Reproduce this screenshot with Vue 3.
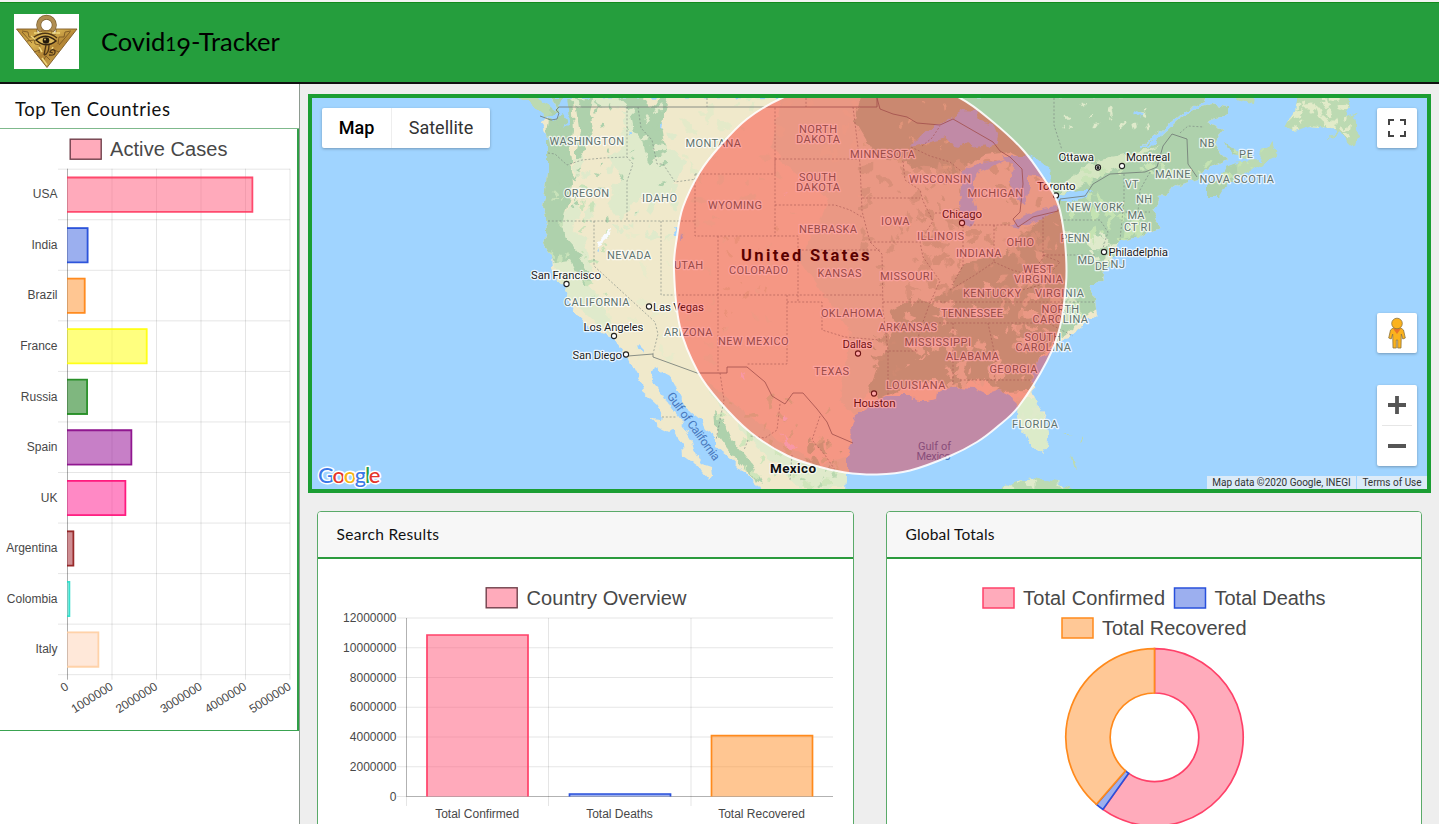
<script setup>
const countries = [
  { name: 'USA', end: 253, color: '255, 51, 91', fill: 'rgba(255, 86, 120, .5)' },
  { name: 'India', end: 88.2, color: '18, 62, 214', fill: 'rgba(56, 96, 224, .5)' },
  { name: 'Brazil', end: 85.3, color: '255, 126, 6', fill: 'rgba(255, 145, 46, .52)' },
  { name: 'France', end: 147.3, color: '255, 255, 0', fill: 'rgba(255, 255, 0, .5)' },
  { name: 'Russia', end: 87.7, color: '22, 135, 22', fill: 'rgba(0, 112, 0, .5)' },
  { name: 'Spain', end: 132, color: '132, 0, 132', fill: 'rgba(144, 0, 144, .5)' },
  { name: 'UK', end: 126, color: '255, 0, 110', fill: 'rgba(255, 20, 140, .5)' },
  { name: 'Argentina', end: 74, color: '139, 20, 20', fill: 'rgba(160, 30, 40, .5)' },
  { name: 'Colombia', end: 70, color: '26, 218, 196', fill: 'rgba(64, 224, 208, .4)' },
  { name: 'Italy', end: 99, color: '255, 205, 158', fill: 'rgba(255, 205, 170, .45)' },
].map((c, i) => ({ ...c, y: 169.5 + i * 50.55 }))

const sideTicks = [0, 1, 2, 3, 4, 5].map((n) => ({ x: 67.5 + n * 44.5, label: n ? n + '000000' : '0' }))
const yTicks = [12, 10, 8, 6, 4, 2, 0].map((n, i) => ({ y: 618 + i * 29.75, label: n ? n + '000000' : '0' }))
const overview = [
  { label: 'Total Confirmed', x: 427, top: 635, line: '#ff4169', fill: 'rgba(255, 86, 120, .5)', mid: 477.2 },
  { label: 'Total Deaths', x: 569.5, top: 794, line: '#2850dc', fill: 'rgba(56, 96, 224, .5)', mid: 619.5 },
  { label: 'Total Recovered', x: 711.5, top: 735.7, line: '#ff8a1c', fill: 'rgba(255, 145, 46, .52)', mid: 761.5 },
]

function slice(a, b) {
  const cx = 1154.5, cy = 737.3, R = 88.7, r = 44.3
  const p = (rad, deg) => {
    const t = (deg * Math.PI) / 180
    return (cx + rad * Math.sin(t)).toFixed(2) + ' ' + (cy - rad * Math.cos(t)).toFixed(2)
  }
  const big = b - a > 180 ? 1 : 0
  return `M${p(R, a)}A${R} ${R} 0 ${big} 1 ${p(R, b)}L${p(r, b)}A${r} ${r} 0 ${big} 0 ${p(r, a)}Z`
}
const slices = [
  { d: slice(0, 215.6), line: '#ff4169', fill: '#ffabbb' },
  { d: slice(215.6, 220.9), line: '#2850dc', fill: '#9cafef' },
  { d: slice(220.9, 360), line: '#ff8a1c', fill: '#ffc896' },
]

const land =
  'M552 98L557 108 551 118 541 119 545 129 548 137 548 171 546 191 543 207 546 217 547 231 544 244 551 254 552 267 557 281 567 287 565 296 575 311 583 321 592 329 612 337 620 347 628 357 635 372 642 384 643 392 657 404 663 414 662 420 650 419 660 427 668 431 673 429 682 444 683 456 697 466 703 474 709 481 713 476 712 467 703 464 695 451 692 441 683 426 678 417 668 404 663 394 653 382 652 374 655 367 663 372 672 377 675 387 680 397 685 407 700 419 705 429 715 436 715 446 730 457 738 466 748 476 757 484 762 492 846 492 847 471 847 454 852 444 851 427 855 416 867 409 875 401 887 396 910 396 918 401 927 401 937 399 938 392 947 389 960 386 973 387 987 394 1000 390 1013 397 1018 406 1017 417 1022 429 1027 439 1035 447 1042 453 1047 447 1048 434 1045 417 1035 399 1032 391 1033 374 1040 357 1053 347 1062 339 1073 336 1078 329 1097 314 1095 301 1090 296 1092 284 1097 284 1103 277 1105 271 1115 257 1117 247 1120 241 1140 237 1160 227 1157 221 1153 211 1160 197 1177 186 1197 179 1200 174 1207 169 1227 159 1220 152 1215 144 1222 129 1207 122 1227 114 1227 107 1213 104 1193 109 1177 121 1160 137 1140 147 1163 129 1183 112 1198 104 1210 96Z'
const islands = [
  'M519 96L533 106 547 117 555 114 553 107 540 100 533 96Z',
  'M1207 186L1207 196 1220 196 1227 184 1247 172 1260 166 1277 156 1272 141 1262 151 1260 161 1240 162 1227 167 1222 176Z',
  'M1225 142L1237 151 1253 154 1250 159 1233 156Z',
  'M1284 127L1293 114 1297 96 1348 96 1350 107 1345 117 1355 114 1358 134 1355 146 1347 142 1340 131 1327 142 1336 131 1320 127 1307 126 1293 131Z',
  'M1234 96L1256 96 1255 105 1244 103Z',
  'M999 492L1013 482 1033 478 1057 482 1079 492Z',
  'M1069 454L1074 460 1077 469 1073 466Z',
  'M1079 442L1082 436 1082 441Z', 'M1063 434L1072 434 1066 435Z',
]

const greens = [
  'M552 96L572 96 574 130 570 150 573 185 566 210 562 225 567 240 580 255 590 280 584 285 570 260 556 262 544 250 540 190Z',
  'M574 96L594 96 590 112 593 130 586 145 581 160 576 180 576 150 579 130Z',
  'M615 96L642 96 650 108 664 96 669 105 660 122 663 140 668 152 655 158 650 166 645 152 642 140 634 130 630 110Z',
  'M861 96L1230 96 1240 200 1165 240 1120 262 1095 310 1040 355 1030 391 1000 392 980 378 950 389 935 380 910 387 880 398 868 392 880 360 895 325 890 310 912 298 930 303 950 288 965 262 1000 255 1030 228 1056 205 1048 170 1010 152 985 155 960 170 950 178 935 168 918 170 900 160 878 158 866 140 854 120Z',
  'M713 410L722 418 732 440 745 456 755 470 762 484 752 478 737 460 722 440 714 425Z',
]
const limes = [
  'M594 96L625 96 640 135 660 150 690 148 680 175 660 200 640 195 620 220 605 200 585 208 570 230 600 245 590 285 620 320 610 335 560 290 548 240 580 190Z',
  'M745 96L862 96 1010 100 1060 180 1060 300 960 360 868 390 858 420 840 400 850 330 800 260 830 200 780 160Z',
  'M846 488L800 488 760 450 720 405 700 375 730 400 780 440 820 465 852 455Z',
]
const tans = [
  'M590 106L626 108 622 150 606 154 620 175 613 200 580 215 573 180Z',
  'M664 122L670 106 780 98 770 160 720 175 690 165 672 150Z',
  'M648 214L700 225 715 245 790 275 815 300 810 345 780 420 700 372 650 346 615 332 600 300 585 240Z',
]

// Seeded scatter of small ground patches over a region
let seed = 11
const rnd = () => (seed = (seed * 16807) % 2147483647) / 2147483647
function scatter(x, y, w, h, n, size, color) {
  let d = ''
  for (let i = 0; i < n; i++) {
    const cx = x + rnd() * w, cy = y + rnd() * h
    const s = size * (0.4 + rnd()), tilt = rnd() * 3
    const pts = []
    for (let k = 0; k < 7; k++) {
      const a = (k / 7) * Math.PI * 2
      const r = s * (0.4 + rnd() * 0.8)
      const px = r * Math.cos(a), py = r * 0.5 * Math.sin(a)
      pts.push((cx + px * Math.cos(tilt) - py * Math.sin(tilt)).toFixed(1) + ' ' + (cy + px * Math.sin(tilt) + py * Math.cos(tilt)).toFixed(1))
    }
    d += 'M' + pts.join('L') + 'Z'
  }
  return { d, color }
}
const patches = [
  scatter(575, 98, 100, 140, 40, 7, '#dfeacb'),
  scatter(550, 100, 120, 140, 30, 4, '#aed1ac'),
  scatter(548, 180, 60, 130, 30, 5, '#c8e2b9'),
  scatter(600, 220, 190, 140, 45, 6, '#e8ebcb'),
  scatter(680, 100, 180, 120, 40, 7, '#e4eac9'),
  scatter(720, 225, 60, 110, 14, 4, '#e0dfba'),
  scatter(862, 165, 100, 130, 55, 7, '#c7dcba'),
  scatter(920, 160, 125, 130, 55, 7, '#c2d9b5'),
  scatter(905, 270, 150, 110, 55, 7, '#dfeacb'),
  scatter(1000, 225, 70, 130, 36, 6, '#d3e2c0'),
  scatter(920, 340, 110, 45, 20, 5, '#dfeacb'),
  scatter(930, 385, 95, 14, 14, 4, '#e6ebcb'),
  scatter(855, 100, 100, 70, 18, 4, '#cfe2ba'),
  scatter(872, 335, 25, 60, 14, 5, '#b4d3ae'),
  scatter(1060, 195, 80, 60, 24, 8, '#c4e3b2'),
  scatter(1090, 235, 28, 45, 18, 6, '#dfeacb'),
  scatter(1080, 160, 90, 20, 16, 6, '#c9e4b7'),
  scatter(1060, 98, 90, 30, 15, 4, '#dfeacb'),
  scatter(1200, 150, 75, 40, 15, 5, '#c4e3b2'),
  scatter(1290, 98, 60, 45, 34, 6, '#e2ebc9'),
  scatter(720, 400, 120, 88, 35, 6, '#cfe5bb'),
  scatter(790, 440, 55, 48, 15, 5, '#b9d8b0'),
  scatter(1020, 410, 26, 40, 8, 6, '#dfeacb'),
  scatter(1000, 478, 75, 14, 10, 6, '#dfeacb'),
  scatter(1065, 300, 30, 30, 10, 5, '#c9e4b7'),
]

const lakes = [
  'M912 146L923 133 953 117 963 110 977 111 981 121 993 124 998 137 996 145 977 148 967 142 960 147 950 145 947 138 930 142Z',
  'M967 167L987 162 1007 159 993 166 980 171 973 181 973 197 977 211 972 224 962 226 959 204 961 184 963 172Z',
  'M1003 156L1027 156 1037 159 1047 174 1050 184 1040 177 1030 174 1030 186 1028 194 1025 204 1018 201 1010 181 1013 167Z',
  'M1010 226L1020 217 1037 211 1057 206 1058 209 1047 216 1020 228Z',
  'M1053 198L1060 195 1080 190 1092 190 1087 197 1070 202 1056 202Z',
  'M1024 158L1037 158 1050 168 1052 182 1042 178Z',
  'M563 98L567 98 569 110 570 124 564 130 567 120 562 114 553 121 548 118 557 112Z',
  'M673 227L677 229 678 236 675 236Z', 'M681 232L683 238 680 240Z', 'M639 344L644 349 642 353Z',
  'M660 123L662 126 660 130Z', 'M628 129L632 134 629 135Z', 'M597 248L600 252 598 253Z', 'M1132 110L1143 113 1140 117 1134 115Z',
]

const stateLines = [
  'M548 153L555 154 567 165 582 160 603 158 627 157', 'M627 107V157L633 164 627 181V221', 'M548 221H695',
  'M638 107L641 128 652 140 657 164 663 164 675 182 697 179', 'M695 174H775V107M695 174V236H798V302M775 159V236',
  'M661 221V295H883', 'M594 221V266L655 322 658 334 653 354', 'M718 236V373', 'M787 295V364H747', 'M787 302H822V330L845 337 880 340',
  'M775 159H861', 'M775 205H835L850 210 862 217', 'M853 107L860 164 862 211 870 242 882 254 883 310 888 350 888 395',
  'M862 198H920', 'M870 242H918', 'M798 250H880', 'M903 161L905 180 920 190 923 201 933 221 920 242 923 257 940 281 930 303 920 330 915 352',
  'M911 147L930 156 950 162 962 172', 'M935 213H960', 'M963 226V266L952 285', 'M970 225H1010', 'M994 225V262L975 275 950 290',
  'M1043 217V258L1030 275 1012 270 994 262', 'M1060 220H1100L1108 232 1103 248', 'M1043 255H1095', 'M1043 255L1060 262 1040 285 1015 292',
  'M883 302H1095', 'M920 323H1048L1073 336', 'M953 323V385', 'M988 323L996 360 994 380', 'M885 351H918', 'M960 380H1030',
  'M662 417H676', 'M720 373L724 400 716 440', 'M780 404L777 430 765 438 750 436', 'M820 416L812 440 825 455 835 470',
  'M748 440L744 450', 'M792 455L790 480', 'M1124 174V200L1120 240', 'M1150 172L1140 190 1138 212', 'M1122 212H1150', 'M1180 133L1188 126 1204 127',
  'M1054 98V125L1062 150', 'M707 98V107', 'M806 98V107', 'M922 146L932 138 940 126',
]

// Overlay outline, smoothed through its vertices
const ring = [
  [782, 98], [747, 119], [720, 146], [700, 172], [683, 207], [677, 237], [674, 270], [680, 327], [698, 372], [720, 402], [750, 432], [787, 455.5],
  [820, 467], [845, 472.5], [877, 474.5], [910, 470.5], [950, 456], [977, 442], [997, 427], [1019, 406], [1047, 361], [1060, 327], [1066, 284], [1066, 255],
  [1063, 226], [1057, 201], [1043, 177], [1023, 150], [993, 122], [960, 98], [915, 82], [830, 82],
]
const ringPath = (() => {
  const n = ring.length
  let d = `M${ring[0]}`
  for (let i = 0; i < n; i++) {
    const a = ring[(i + n - 1) % n], b = ring[i], c = ring[(i + 1) % n], e = ring[(i + 2) % n]
    d += `C${b[0] + (c[0] - a[0]) / 6} ${b[1] + (c[1] - a[1]) / 6} ${c[0] - (e[0] - b[0]) / 6} ${c[1] - (e[1] - b[1]) / 6} ${c[0]} ${c[1]}`
  }
  return d + 'Z'
})()

// text, left, right, baseline
const states = [
  ['WASHINGTON', 549.5, 624, 145.5], ['OREGON', 564, 609, 197], ['IDAHO', 642, 677, 202], ['MONTANA', 685.5, 741, 147], ['NEVADA', 607, 651, 259],
  ['UTAH', 674, 703, 269], ['WYOMING', 708, 762, 209.5], ['COLORADO', 729, 788, 274.5], ['NORTH', 799, 837, 133.3], ['DAKOTA', 796, 840, 143.3],
  ['SOUTH', 799, 836, 181], ['DAKOTA', 796, 840, 191], ['MINNESOTA', 850, 915, 158.5], ['WISCONSIN', 909, 971, 183], ['MICHIGAN', 967.5, 1023, 197],
  ['IOWA', 881, 909.5, 225], ['NEBRASKA', 799, 857, 233], ['ILLINOIS', 917, 964, 240.5], ['INDIANA', 956, 1001.5, 257.5], ['OHIO', 1006.5, 1034, 246.5],
  ['KANSAS', 817.5, 861.5, 277.5], ['MISSOURI', 880, 933, 280], ['WEST', 1023, 1053, 273], ['VIRGINIA', 1014, 1063, 283], ['KENTUCKY', 963, 1021, 297],
  ['VIRGINIA', 1035, 1084, 297], ['CALIFORNIA', 564, 629.5, 306], ['ARIZONA', 664, 712.5, 336.5], ['NEW MEXICO', 718, 788.5, 345], ['OKLAHOMA', 821, 883, 317.5],
  ['TENNESSEE', 941, 1003, 317.5], ['ARKANSAS', 878.5, 937, 331.5], ['MISSISSIPPI', 904.5, 971, 346], ['ALABAMA', 946, 999, 360.5], ['GEORGIA', 989.5, 1037.5, 373.5],
  ['NORTH', 1041.5, 1079, 313.5], ['CAROLINA', 1032.5, 1088, 323.5], ['SOUTH', 1024.5, 1061, 341.5], ['CAROLINA', 1015.5, 1071, 351.5], ['TEXAS', 814, 849, 375],
  ['LOUISIANA', 886, 945.5, 389.5], ['FLORIDA', 1012, 1058, 428.5], ['PENN', 1060.5, 1089.5, 242.5], ['NEW YORK', 1066.5, 1123, 211.5], ['MD', 1077.5, 1094.5, 264],
  ['DE', 1095, 1108, 270], ['NJ', 1110.5, 1125, 268.5], ['CT', 1124, 1137.5, 231.5], ['RI', 1140.5, 1151, 231.5], ['MA', 1127.5, 1144.5, 219.5],
  ['NH', 1136, 1152, 203.5], ['VT', 1125, 1138.5, 188], ['MAINE', 1155, 1190.5, 178], ['NB', 1199.5, 1214.5, 147], ['PE', 1239, 1253, 158], ['NOVA SCOTIA', 1199.5, 1274, 183],
]
const cities = [
  ['San Francisco', 531, 601, 279, 566.5, 284], ['Los Angeles', 583.5, 643.5, 331, 614, 336], ['San Diego', 572.5, 622, 359, 626, 354.5],
  ['Las Vegas', 653, 704, 311, 649, 306.5], ['Dallas', 842.5, 872.5, 348.5, 858, 353.5], ['Houston', 853.5, 895.5, 407.5, 874, 393.5],
  ['Chicago', 942, 982, 218, 962, 223], ['Toronto', 1037, 1075.5, 190, 1056, 195.5], ['Ottawa', 1058.5, 1094, 161.5, 1098, 167.5],
  ['Montreal', 1126, 1170, 161, 1122, 166], ['Philadelphia', 1108.5, 1168, 256.5, 1104, 252],
]
</script>

<template>
  <div class="page">
    <header class="topbar">
      <svg class="logo" width="65" height="55" viewBox="0 0 65 55">
        <defs>
          <linearGradient id="gold" x1="0" y1="0" x2="1" y2="1">
            <stop offset="0" stop-color="#b98a35" /><stop offset=".35" stop-color="#d9b352" />
            <stop offset=".55" stop-color="#b28433" /><stop offset="1" stop-color="#e0bf62" />
          </linearGradient>
        </defs>
        <rect width="65" height="55" fill="#fff" />
        <circle cx="32.500" cy="11" r="7.800" fill="none" stroke="#7b6030" stroke-width="5" />
        <circle cx="32.500" cy="11" r="7.800" fill="none" stroke="#b08d51" stroke-width="3.600" />
        <path d="M2.500 15H23v5h4l0-3h11v3h4v-5h21L33 53.500Z" fill="url(#gold)" stroke="#7d5a24" stroke-width=".9" />
        <path d="M8 17l6 1 1 5 5 0 1 7 5 1-1 8M57 17l-6 1-1 5-5 0-1 7M13 27l7-1M20 38l6-2M45 38l-5-2M8 18l10 11M56 18L45 31M29 47l3-5 4 4" fill="none" stroke="#7d5a24" stroke-width=".9" />
        <path d="M20 19h8M38 19h8M17 22l5 4M28 44l5 7M25 33l3 5M39 33l-2 4" stroke="#f0d77c" stroke-width="1.500" />
        <path d="M22 26q10-8 20 1-10 8-20-1Z" fill="#dcb95e" stroke="#352410" stroke-width="1.500" />
        <path d="M20 23q12-8 23 1M32 31l-2 10M35 31q0 9-5 10M35 41q7 1 6-4-3-3-5 1l3 1" fill="none" stroke="#4d3515" stroke-width="1.300" />
        <circle cx="32" cy="26.500" r="3.300" fill="#22180c" /><circle cx="31" cy="25.500" r=".9" fill="#e7c96d" />
      </svg>
      <h1>Covid<span class="low-one">1</span><span class="low-nine">9</span>-Tracker</h1>
    </header>

    <div class="body">
      <aside class="side">
        <h2>Top Ten Countries</h2>
        <div class="side-chart">
          <svg width="298" height="601" viewBox="0 129.300 298 601" class="chart">
            <g stroke="#000" stroke-opacity=".1">
              <path v-for="n in 11" :key="'h' + n" :d="`M58 ${169.5 + (n - 1) * 50.55}H290`" />
              <path v-for="t in sideTicks.slice(1)" :key="'v' + t.x" :d="`M${t.x} 169V680`" />
            </g>
            <path d="M67.500 169V680" stroke="#000" stroke-opacity=".32" />
            <g v-for="c in countries" :key="c.name">
              <rect x="67" :y="c.y + 7.6" :width="c.end - 67" height="35.5" :fill="c.fill" />
              <path :d="`M67 ${c.y + 8.3}H${c.end - 0.6}V${c.y + 42.6}H67`" fill="none" :stroke="`rgb(${c.color})`" stroke-opacity=".82" stroke-width="1.800" />
              <text x="57.500" :y="c.y + 29.2" text-anchor="end" font-size="12">{{ c.name }}</text>
            </g>
            <text v-for="t in sideTicks" :key="t.label" text-anchor="end" font-size="12" :transform="`translate(${t.x + 2} 689) rotate(-32)`">{{ t.label }}</text>
            <rect x="70.200" y="139.500" width="31" height="20" fill="#ffabbb" stroke="#70404b" stroke-width="1.400" />
            <text x="110" y="156.300" font-size="20" textLength="117.500">Active Cases</text>
          </svg>
        </div>
      </aside>

      <main class="main">
        <section class="map">
          <svg class="canvas" viewBox="312 98 1115 391">
            <defs>
              <filter id="rough" x="312" y="90" width="1115" height="405" filterUnits="userSpaceOnUse" color-interpolation-filters="sRGB">
                <feTurbulence type="fractalNoise" baseFrequency=".12" numOctaves="2" seed="4" />
                <feDisplacementMap in="SourceGraphic" scale="8" xChannelSelector="R" yChannelSelector="G" />
              </filter>
              <clipPath id="ground"><path :d="land + islands.join('')" /></clipPath>
            </defs>
            <rect x="312" y="98" width="1115" height="391" fill="#a0d4ff" />
            <g filter="url(#rough)">
              <path :d="land" fill="#f0e9cb" />
              <path v-for="d in islands" :key="d" :d="d" fill="#bcdab2" />
              <g clip-path="url(#ground)">
                <path v-for="d in limes" :key="d" :d="d" fill="#dfeacb" />
                <path v-for="d in tans" :key="d" :d="d" fill="#f0e9cb" />
                <path v-for="d in greens" :key="d" :d="d" fill="#aed1ac" />
                <path d="M1017 398L1035 398 1050 430 1046 455 1030 445 1017 425Z" fill="#dcebc9" />
                <path d="M1060 196L1090 180 1125 165 1160 145 1135 152 1095 160 1060 185Z" fill="#d5e6c2" />
                <path v-for="(p, i) in patches" :key="i" :d="p.d" :fill="p.color" />
                <path d="M597 246L603 235 611 229 610 236 603 242Z" fill="#f8fbff" />
              </g>
              <path v-for="d in lakes" :key="d" :d="d" fill="#a0d4ff" />
              <path d="M1140 147L1150 145 1162 134" fill="none" stroke="#a0d4ff" stroke-width="2.500" />
              <path d="M741 370l4 10-4-2zM784 413l4 7-4 2zM780 432l8 10 10 3-8 6zM789 192l-7 6 4-5z" fill="#f5e9ff" />
            </g>
            <path v-for="d in stateLines" :key="d" :d="d" fill="none" stroke="#76827c" stroke-opacity=".75" stroke-width=".8" stroke-dasharray="2 1.800" />
            <path d="M540 116L551 120 557 119 559 113 556 110 559 107H877V98L880 109 893 114 907 117 917 123 940 125 953 119 993 142 1000 151 1010 157 1022 169 1023 184 1020 212 1013 219 1018 227 1033 217 1058 211 1060 199 1085 196 1093 184 1110 174 1145 172 1157 167 1163 146 1172 134 1187 139 1188 164 1197 177M628 356L653 354V357L697 373H727V367H747L765 382 772 396 785 404 793 393 803 393 817 409 827 422 832 434 853 443" fill="none" stroke="#6e7774" stroke-width=".8" />
            <g class="state">
              <text v-for="(s, i) in states" :key="i" :x="s[1]" :y="s[3] - 0.4" :textLength="s[2] - s[1]">{{ s[0] }}</text>
            </g>
            <g class="city">
              <template v-for="c in cities" :key="c[0]">
                <text :x="c[1]" :y="c[3] - 0.5" :textLength="c[2] - c[1]">{{ c[0] }}</text>
                <circle :cx="c[4]" :cy="c[5]" r="2.600" />
              </template>
              <circle class="dot" cx="1098" cy="167.500" r="1" />
            </g>
            <text class="country usa" x="741" y="260.500" textLength="128.500">United States</text>
            <text class="country" x="770" y="473" font-size="13.500" textLength="46">Mexico</text>
            <g class="sea">
              <text x="918" y="450" textLength="33">Gulf of</text>
              <text x="916.500" y="460" textLength="34">Mexico</text>
              <text transform="translate(666.500 396) rotate(54)" x="0" y="0" font-size="12" textLength="81">Gulf of California</text>
            </g>
            <path :d="ringPath" fill="#f00" fill-opacity=".35" stroke="#fff" stroke-opacity=".9" stroke-width="2" />
            <text class="brand" x="318" y="482.500" textLength="62.500"><tspan fill="#3b78e7">G</tspan><tspan fill="#e5352b">o</tspan><tspan fill="#f6b514">o</tspan><tspan fill="#3b78e7">g</tspan><tspan fill="#2a9d48">l</tspan><tspan fill="#e5352b">e</tspan></text>
          </svg>
          <div class="types"><b>Map</b><span>Satellite</span></div>
          <div class="control full">
            <svg width="18" height="18" viewBox="0 0 18 18"><path d="M1 6V1h5M12 1h5v5M17 12v5h-5M6 17H1v-5" fill="none" stroke="#444" stroke-width="2" /></svg>
          </div>
          <div class="control peg">
            <svg width="18" height="32" viewBox="0 0 18 32" stroke="#8a7440" stroke-width=".8">
              <path d="M5 11h8l2.500 2 1.800 8-2.500 1-1.500-5-.3 14H9.700V23H8.300v8H5L4.700 17l-1.500 5-2.500-1 1.800-8Z" fill="#fbb21d" />
              <path d="M5 11.500h8L9 17Z" fill="#e8742a" stroke="none" />
              <circle cx="9" cy="6.500" r="5.300" fill="#fbb21d" />
            </svg>
          </div>
          <div class="control zoom">
            <svg width="40" height="81" viewBox="0 0 40 81">
              <path d="M11 20h18M20 11v18M11 61h18" stroke="#555" stroke-width="3.800" /><path d="M5 40.500h30" stroke="#e6e6e6" />
            </svg>
          </div>
          <div class="credits"><span>Map data ©2020 Google, INEGI</span><span>Terms of Use</span></div>
        </section>

        <div class="cards">
          <section class="card">
            <h3>Search Results</h3>
            <svg width="535" height="266" viewBox="318 559 535 266" class="chart">
              <g stroke="#000" stroke-opacity=".1">
                <path v-for="t in yTicks" :key="t.y" :d="`M397 ${t.y}H833`" />
                <path d="M406.500 618V806M548.500 618V806M691 618V806" />
              </g>
              <path d="M406.500 618V796M406 796.500H833" stroke="#000" stroke-opacity=".22" fill="none" />
              <text v-for="t in yTicks" :key="'t' + t.y" x="396.500" :y="t.y + 4.2" font-size="12" text-anchor="end">{{ t.label }}</text>
              <g v-for="b in overview" :key="b.label">
                <rect :x="b.x" :y="b.top" width="101" :height="796.500 - b.top" :fill="b.fill" />
                <path :d="`M${b.x} 796.5V${b.top}H${b.x + 101}V796.5`" fill="none" :stroke="b.line" stroke-width="1.700" />
                <text :x="b.mid" y="817.500" text-anchor="middle" font-size="12">{{ b.label }}</text>
              </g>
              <rect x="486.200" y="587.800" width="31" height="20" fill="#ffabbb" stroke="#70404b" stroke-width="1.400" />
              <text x="526.500" y="604.500" font-size="20" textLength="160">Country Overview</text>
            </svg>
          </section>
          <section class="card">
            <h3 class="totals">Global Totals</h3>
            <svg width="534" height="266" viewBox="887 559 534 266" class="chart">
              <g stroke-width="1.500">
                <rect x="983" y="588" width="31" height="20" fill="#ffabbb" stroke="#ff4169" />
                <rect x="1174.500" y="588" width="31" height="20" fill="#9cafef" stroke="#2850dc" />
                <rect x="1062" y="618" width="31" height="20" fill="#ffc896" stroke="#ff8a1c" />
              </g>
              <g font-size="20">
                <text x="1023" y="604.500" textLength="142">Total Confirmed</text>
                <text x="1214.500" y="604.500" textLength="111">Total Deaths</text>
                <text x="1102" y="634.500" textLength="144.500">Total Recovered</text>
              </g>
              <path v-for="s in slices" :key="s.line" :d="s.d" :fill="s.fill" :stroke="s.line" stroke-width="1.700" />
            </svg>
          </section>
        </div>
      </main>
    </div>
  </div>
</template>

<style>
body { margin: 0; overflow: hidden; }
</style>

<style scoped>
.page { box-sizing: border-box; height: 824px; padding-top: 2px; display: flex; flex-direction: column; overflow: hidden; background: #f3f3f3; font-family: Lato, "Open Sans", sans-serif; color: #111; }
.topbar { box-sizing: border-box; flex: none; height: 82px; display: flex; align-items: flex-start; padding: 12px 14px; background: #259e3d; border-top: 1px solid #128a1c; border-bottom: 2px solid #111; }
.logo { display: block; margin-top: -1px; }
h1, h2, h3 { margin: 0; font-weight: 400; white-space: nowrap; }
h1 { margin: 10px 0 0 22px; font-size: 25.500px; line-height: 32px; color: #000; letter-spacing: -.05px; }
.low-one { font-size: 19px; }
.low-nine { position: relative; top: 5px; }
.body { flex: 1; min-height: 0; display: flex; }
.side { box-sizing: border-box; width: 300px; flex: none; background: #fff; border-right: 1px solid #8d9a90; }
h2 { box-sizing: border-box; height: 45px; padding: 10px 0 0 15px; font-size: 18.500px; line-height: 31px; letter-spacing: .56px; border-bottom: 1px solid #7fb98c; }
.side-chart { box-sizing: border-box; width: 299px; height: 602px; border-right: 2px solid #2f9f47; border-bottom: 1px solid #3aa351; overflow: hidden; }
.chart { display: block; font-family: "Liberation Sans", Arial, sans-serif; fill: #484848; }
.main { flex: 1; min-width: 0; display: flex; flex-direction: column; padding: 10px 8px 0; background: #eee; }
.map { position: relative; box-sizing: border-box; flex: none; height: 399px; border: 4px solid #1b9e33; overflow: hidden; }
.canvas { display: block; width: 1115px; height: 391px; font-family: Roboto, sans-serif; }
.canvas text { paint-order: stroke; stroke-linejoin: round; }
.state { font-size: 11px; fill: #61736e; stroke: #fff; stroke-opacity: .75; stroke-width: 2.500px; }
.city text { font-size: 11.500px; fill: #1c1c1c; stroke: #fff; stroke-opacity: .8; stroke-width: 2.500px; }
.city circle { fill: #fff; stroke: #222; stroke-width: 1.100px; }
.city .dot { fill: #222; }
.country { font-weight: 700; fill: #111; stroke: #fff; stroke-opacity: .7; stroke-width: 2.500px; }
.usa { font-size: 16.500px; fill: #000; stroke-width: 0; }
.sea { font-size: 11px; fill: #4878bd; }
.brand { font-family: Lato, sans-serif; font-size: 22px; font-weight: 500; stroke: #fff; stroke-width: 3px; }
.types, .control { position: absolute; background: #fff; border-radius: 2px; box-shadow: 0 1px 3px rgba(0, 0, 0, .28); }
.types { left: 10px; top: 10px; width: 168px; height: 40px; display: flex; align-items: center; font: 18px/40px Roboto, sans-serif; color: #333; }
.types b { width: 69px; text-align: center; font-weight: 500; color: #000; border-right: 1px solid #eee; }
.types span { flex: 1; text-align: center; }
.control { right: 10px; width: 40px; display: flex; align-items: center; justify-content: center; }
.full { top: 10px; height: 40px; }
.peg { top: 215px; height: 40px; }
.zoom { top: 287px; height: 81px; }
.credits { position: absolute; right: 0; bottom: -1px; display: flex; gap: 1px; font: 10px/14px Roboto, sans-serif; color: #333; }
.credits span { box-sizing: border-box; height: 14px; width: 149px; text-align: center; background: rgba(245, 245, 245, .7); white-space: nowrap; }
.credits span + span { width: 70px; }
.cards { flex: 1; min-height: 0; display: flex; justify-content: space-between; padding: 18px 9px 0; }
.card { box-sizing: border-box; width: 537px; height: 360px; background: #fff; border: 1px solid #5aaa69; border-radius: 4px; overflow: hidden; }
.card:last-child { width: 536px; }
h3 { box-sizing: border-box; height: 47px; padding-left: 18.500px; font-size: 15.500px; line-height: 45px; letter-spacing: .33px; background: #f7f7f7; border-bottom: 2px solid #2b9b3d; }
.totals { letter-spacing: .18px; }
</style>
